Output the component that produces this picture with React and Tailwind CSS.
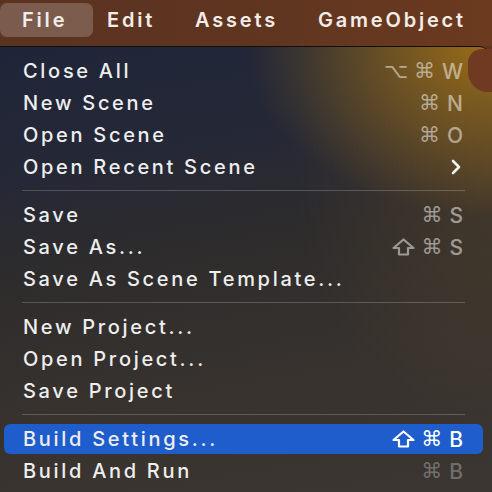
import React from "react";

const SYM = "font-['DejaVu_Sans',sans-serif]";

function ShiftIcon() {
  return (
    <svg width="23" height="18" viewBox="0 0 23 18" className="shrink-0">
      <path
        d="M11.5 1.5 L21.5 10 L16 10 L16 16.5 L7 16.5 L7 10 L1.5 10 Z"
        fill="none"
        stroke="currentColor"
        strokeWidth="2.2"
        strokeLinejoin="round"
      />
    </svg>
  );
}

function Shortcut({ keys, letter, dim, active }) {
  const color = active ? "text-white" : dim ? "text-white/30" : "text-white/50";
  return (
    <div className={`flex items-center gap-[6px] ${color}`}>
      {keys.map((k, i) =>
        k === "shift" ? (
          <ShiftIcon key={i} />
        ) : (
          <span key={i} className={`${SYM} text-[21px] leading-none`}>{k}</span>
        )
      )}
      <span className="text-[21px] font-medium leading-none ml-[1px]">{letter}</span>
    </div>
  );
}

function Row({ label, keys, letter, dim, active, chevron }) {
  return (
    <div className="h-8 ml-[4px] mr-[9px] flex items-center">
      <div
        className={`w-full flex items-center justify-between pl-[19px] pr-[20px] ${
          active ? "h-[30px] bg-[#1e5dcb] rounded-[6px]" : "h-8"
        }`}
      >
        <span className="text-[20px] font-medium tracking-[2.7px] text-[#eeeeee] leading-none">
          {label}
        </span>
        {letter && <Shortcut keys={keys} letter={letter} dim={dim} active={active} />}
        {chevron && (
          <svg width="12" height="16" viewBox="0 0 12 16" className="mr-[1px]">
            <polyline points="3,2 9,8 3,14" fill="none" stroke="#f2f2f2" strokeWidth="2.6" strokeLinecap="round" strokeLinejoin="round" />
          </svg>
        )}
      </div>
    </div>
  );
}

function Sep() {
  return (
    <div className="h-4 flex items-center ml-[22px] mr-[27px]">
      <div className="h-px w-full bg-white/20 -mt-[1px]" />
    </div>
  );
}

export default function App() {
  return (
    <div className="relative w-[492px] h-[492px] overflow-hidden bg-[#5d3521] font-['Inter',sans-serif]">
      <div className="h-[46px] flex items-start pt-[3px] bg-[linear-gradient(90deg,#5a3321_0%,#5f3520_50%,#6b3a1f_100%)] text-[20px] font-semibold tracking-[2.8px] text-[#f3ece8]">
        <div className="h-[34px] w-[93px] rounded-[7px] bg-white/20 flex items-center pl-[22px]">File</div>
        <div className="h-[34px] flex items-center ml-[14px]">Edit</div>
        <div className="h-[34px] flex items-center ml-[40px]">Assets</div>
        <div className="h-[34px] flex items-center ml-[40px]">GameObject</div>
      </div>
      <div className="h-[446px] rounded-tr-[14px] border-t border-black/70 pt-[8px] bg-[radial-gradient(ellipse_50%_38%_at_100%_0%,rgba(165,115,20,0.9),transparent),radial-gradient(ellipse_40%_60%_at_100%_25%,rgba(110,80,40,0.35),transparent),linear-gradient(170deg,#1f2539_0%,#252836_25%,#2e2c2c_45%,#37322e_70%,#3b3632_100%)]">
        <Row label="Close All" keys={["⌥", "⌘"]} letter="W" />
        <Row label="New Scene" keys={["⌘"]} letter="N" />
        <Row label="Open Scene" keys={["⌘"]} letter="O" />
        <Row label="Open Recent Scene" chevron />
        <Sep />
        <Row label="Save" keys={["⌘"]} letter="S" />
        <Row label="Save As..." keys={["shift", "⌘"]} letter="S" />
        <Row label="Save As Scene Template..." />
        <Sep />
        <Row label="New Project..." />
        <Row label="Open Project..." />
        <Row label="Save Project" />
        <Sep />
        <Row label="Build Settings..." keys={["shift", "⌘"]} letter="B" active />
        <Row label="Build And Run" keys={["⌘"]} letter="B" dim />
      </div>
      <div className="absolute left-[468px] top-[49px] w-[30px] h-[43px] rounded-tl-[14px] rounded-bl-[20px] bg-[#703a22]" />
    </div>
  );
}
